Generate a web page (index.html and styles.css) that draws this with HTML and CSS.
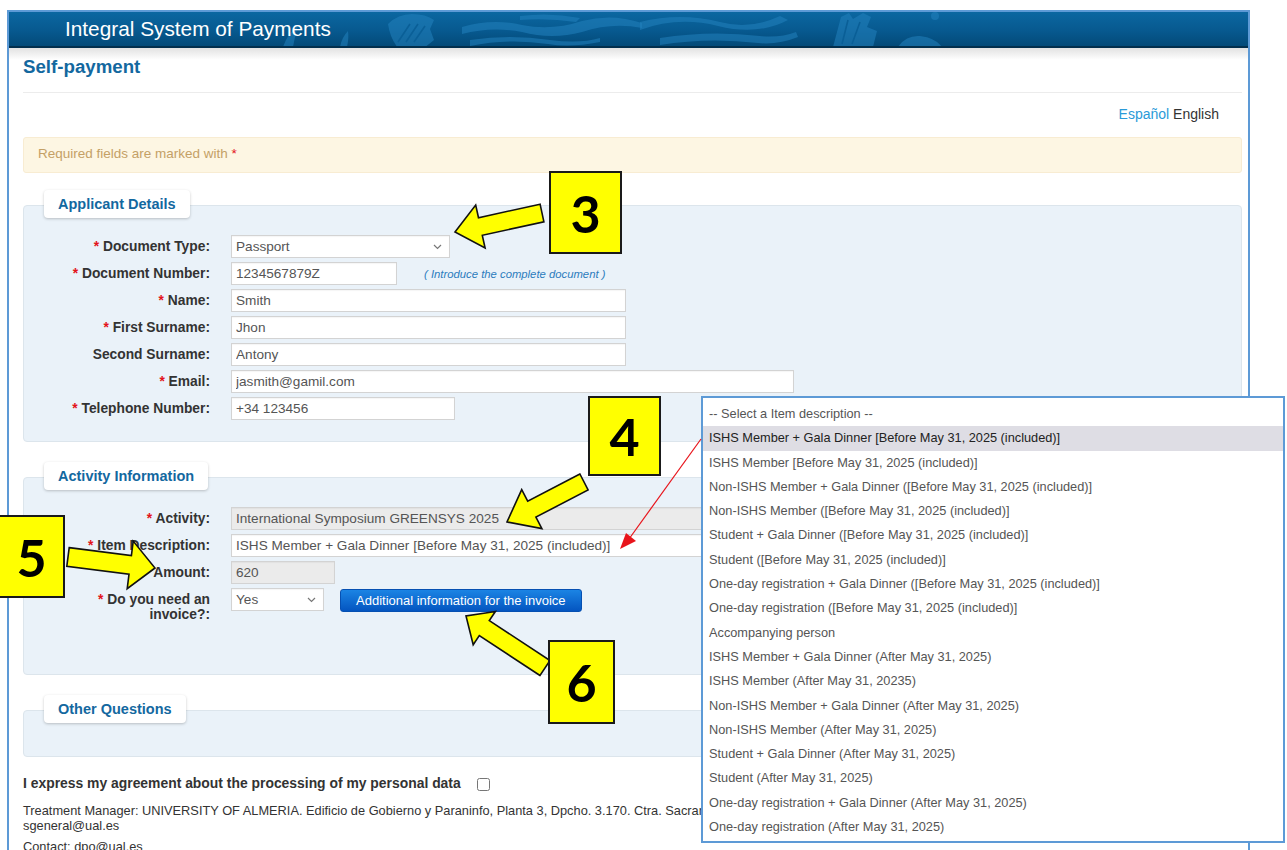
FILE: index.html
```html
<!DOCTYPE html>
<html lang="en">
<head>
<meta charset="utf-8">
<title>Integral System of Payments – Self-payment</title>
<link rel="stylesheet" href="styles.css">
</head>
<body>
<div class="frame">
  <header class="topbar">
    <svg class="topbar-art" width="1239" height="34" viewBox="9 12 1239 34" aria-hidden="true">
      <g fill="#2381bd" fill-opacity="0.55">
        <path d="M283 47 q5 -14 15 -22 q-3 11 -5 22 z"/>
        <path d="M340 47 q2 -10 8 -16 q1 8 -1 16 z"/>
        <path d="M388 24 q10 -10 24 -10 q14 0 22 6 l-4 9 l4 11 l-10 8 l-26 0 q-8 -10 -10 -24 z"/>
        <path d="M462 27 q30 -9 60 -2 q30 6 60 -4 q30 -8 60 2 l0 5 q-30 -6 -60 4 q-30 8 -60 0 q-30 -6 -60 2 z"/>
        <path d="M470 40 q40 -6 80 0 q30 4 50 -2 l0 4 q-30 6 -52 2 q-40 -6 -78 2 z"/>
        <path d="M520 16 q30 -4 60 2 l-4 4 q-28 -4 -56 -2 z"/>
        <path d="M640 22 q40 -10 80 0 q30 8 60 -6 l8 4 q-30 16 -70 6 q-40 -10 -78 4 z"/>
        <path d="M660 38 q50 -8 100 -2 q20 2 36 -4 l2 5 q-20 8 -40 6 q-50 -6 -98 2 z"/>
        <path d="M833 47 l8 -30 l8 -4 l4 6 l10 -6 l8 4 l-4 10 l10 4 l-4 16 z"/>
        <path d="M898 47 q8 -12 22 -11 q16 2 22 11 z"/>
        <circle cx="935" cy="16" r="4"/>
      </g>
      <g stroke="#0a5f97" stroke-width="1.6" fill="none">
        <path d="M398 42 l12 -18 M406 42 l12 -18 M414 42 l11 -16 M842 44 l6 -24 M852 44 l8 -22"/>
      </g>
    </svg>
    <h1 class="topbar-title">Integral System of Payments</h1>
  </header>

  <main class="content">
    <h2 class="page-title">Self-payment</h2>
    <hr class="rule">
    <div class="lang"><a href="#" class="lang-link">Español</a> <span class="lang-current">English</span></div>
    <div class="alert">Required fields are marked with <span class="req">*</span></div>

    <section class="group">
      <div class="group-tab">Applicant Details</div>
      <div class="group-body">
        <div class="form-grid">
          <label class="lbl"><span class="req">*</span> Document Type:</label>
          <div class="ctrl">
            <div class="field select w-doctype"><span>Passport</span>
              <svg class="chev" width="9" height="6" viewBox="0 0 9 6"><path d="M1 1 L4.5 4.5 L8 1"/></svg>
            </div>
          </div>

          <label class="lbl"><span class="req">*</span> Document Number:</label>
          <div class="ctrl">
            <input class="field w-docnum" type="text" value="1234567879Z">
            <span class="hint">( Introduce the complete document )</span>
          </div>

          <label class="lbl"><span class="req">*</span> Name:</label>
          <div class="ctrl"><input class="field w-name" type="text" value="Smith"></div>

          <label class="lbl"><span class="req">*</span> First Surname:</label>
          <div class="ctrl"><input class="field w-name" type="text" value="Jhon"></div>

          <label class="lbl">Second Surname:</label>
          <div class="ctrl"><input class="field w-name" type="text" value="Antony"></div>

          <label class="lbl"><span class="req">*</span> Email:</label>
          <div class="ctrl"><input class="field w-wide" type="text" value="jasmith@gamil.com"></div>

          <label class="lbl"><span class="req">*</span> Telephone Number:</label>
          <div class="ctrl"><input class="field w-phone" type="text" value="+34 123456"></div>
        </div>
      </div>
    </section>

    <section class="group">
      <div class="group-tab">Activity Information</div>
      <div class="group-body group-body-tall">
        <div class="form-grid">
          <label class="lbl"><span class="req">*</span> Activity:</label>
          <div class="ctrl"><input class="field w-wide" type="text" value="International Symposium GREENSYS 2025" disabled></div>

          <label class="lbl"><span class="req">*</span> Item Description:</label>
          <div class="ctrl">
            <div class="field select w-wide"><span>ISHS Member + Gala Dinner [Before May 31, 2025 (included)]</span>
              <svg class="chev" width="9" height="6" viewBox="0 0 9 6"><path d="M1 1 L4.5 4.5 L8 1"/></svg>
            </div>
          </div>

          <label class="lbl">Amount:</label>
          <div class="ctrl"><input class="field w-amount" type="text" value="620" disabled></div>

          <label class="lbl"><span class="req">*</span> Do you need an invoice?:</label>
          <div class="ctrl ctrl-top">
            <div class="field select w-yes"><span>Yes</span>
              <svg class="chev" width="9" height="6" viewBox="0 0 9 6"><path d="M1 1 L4.5 4.5 L8 1"/></svg>
            </div>
            <button class="btn-primary" type="button">Additional information for the invoice</button>
          </div>
        </div>
      </div>
    </section>

    <section class="group">
      <div class="group-tab">Other Questions</div>
      <div class="group-body group-body-empty"></div>
    </section>

    <div class="consent">
      <span>I express my agreement about the processing of my personal data</span>
      <input class="consent-box" type="checkbox">
    </div>
    <p class="legal">Treatment Manager: UNIVERSITY OF ALMERIA. Edificio de Gobierno y Paraninfo, Planta 3, Dpcho. 3.170. Ctra. Sacramento s/n. La Cañada de San Urbano. 04120 Almería. Telephone: 950015000. Email: sgeneral@ual.es</p>
    <p class="legal legal-next">Contact: dpo@ual.es</p>
  </main>
</div>

<ul class="listbox">
  <li>-- Select a Item description --</li>
  <li class="is-active">ISHS Member + Gala Dinner [Before May 31, 2025 (included)]</li>
  <li>ISHS Member [Before May 31, 2025 (included)]</li>
  <li>Non-ISHS Member + Gala Dinner ([Before May 31, 2025 (included)]</li>
  <li>Non-ISHS Member ([Before May 31, 2025 (included)]</li>
  <li>Student + Gala Dinner ([Before May 31, 2025 (included)]</li>
  <li>Student ([Before May 31, 2025 (included)]</li>
  <li>One-day registration + Gala Dinner ([Before May 31, 2025 (included)]</li>
  <li>One-day registration ([Before May 31, 2025 (included)]</li>
  <li>Accompanying person</li>
  <li>ISHS Member + Gala Dinner (After May 31, 2025)</li>
  <li>ISHS Member (After May 31, 20235)</li>
  <li>Non-ISHS Member + Gala Dinner (After May 31, 2025)</li>
  <li>Non-ISHS Member (After May 31, 2025)</li>
  <li>Student + Gala Dinner (After May 31, 2025)</li>
  <li>Student (After May 31, 2025)</li>
  <li>One-day registration + Gala Dinner (After May 31, 2025)</li>
  <li>One-day registration (After May 31, 2025)</li>
</ul>

<svg class="marks" width="1287" height="850" viewBox="0 0 1287 850" aria-hidden="true">
  <line x1="701" y1="439" x2="629" y2="539" stroke="#e8141b" stroke-width="1.2"/>
  <polygon points="620,549 636,541 626,533" fill="#e8141b"/>
  <g fill="#ffff00" stroke="#111" stroke-width="1.6" stroke-linejoin="miter">
    <polygon points="540.1,204.2 478.5,217.7 475.7,205.0 455,232 485.1,248.0 482.3,235.3 543.9,221.8"/>
    <polygon points="579.9,474.0 527.7,501.1 521.7,489.6 507,522 541.9,528.6 535.9,517.1 588.1,490.0"/>
    <polygon points="69.2,547.6 131.4,555.5 133.2,541.1 155,568 127.2,588.7 129.0,574.3 66.8,566.4"/>
    <polygon points="540,675.5 479.3,635.6 473.2,644.7 466,616 495.4,611.5 489.3,620.6 550,660.5"/>
  </g>
</svg>

<div class="callout callout-3">3</div>
<div class="callout callout-4">4</div>
<div class="callout callout-5">5</div>
<div class="callout callout-6">6</div>
</body>
</html>
```

FILE: styles.css
```css
* {
  box-sizing: border-box;
}

html,
body {
  margin: 0;
  padding: 0;
}

body {
  position: relative;
  width: 1287px;
  height: 850px;
  overflow: hidden;
  background: #fff;
  font-family: "Liberation Sans", Arial, sans-serif;
  font-size: 13px;
  color: #333;
}

/* Outer window frame */
.frame {
  margin: 10px 0 0 7px;
  width: 1243px;
  min-height: 840px;
  border: 2px solid #5d9ad6;
  border-bottom: 0;
}

/* Top application bar */
.topbar {
  position: relative;
  height: 36px;
  overflow: hidden;
  background: linear-gradient(#0b67a1, #07598f 55%, #034a78);
  border-bottom: 2px solid #022f4d;
}

.topbar-art {
  position: absolute;
  left: 0;
  top: 0;
}

.topbar-title {
  position: relative;
  margin: 0;
  padding-left: 56px;
  font-size: 20.8px;
  font-weight: normal;
  line-height: 33px;
  color: #fff;
}

/* Page body */
.content {
  padding: 8px 6px 0 14px;
  background: linear-gradient(#e2e2e2, #fff) no-repeat;
  background-size: 100% 12px;
}

.page-title {
  margin: 0;
  font-size: 18.7px;
  line-height: 22px;
  font-weight: bold;
  color: #13689f;
}

.rule {
  margin: 14px 0 0;
  border: 0;
  border-top: 1px solid #ececec;
}

.lang {
  margin-top: 12px;
  padding-right: 23px;
  text-align: right;
  font-size: 14px;
  line-height: 19px;
}

.lang-link {
  color: #2a9ad8;
  text-decoration: none;
}

.lang-current {
  color: #333;
}

.alert {
  margin-top: 13px;
  padding: 7px 14px 9px;
  line-height: 18px;
  background: #fdf6e3;
  border: 1px solid #f8ecd2;
  border-radius: 3px;
  font-size: 13.5px;
  color: #c4a066;
}

.req {
  color: #e3141b;
}

/* Field groups */
.group {
  margin-top: 20px;
}

.alert + .group {
  margin-top: 17px;
}

.group-tab {
  position: relative;
  z-index: 1;
  width: fit-content;
  height: 28px;
  margin: 0 0 -13px 21px;
  padding: 0 14px;
  line-height: 28px;
  background: #fff;
  border-radius: 4px;
  box-shadow: 0 1px 3px rgba(0, 0, 0, 0.22);
  font-size: 14.5px;
  font-weight: bold;
  color: #13689f;
}

.group-body {
  padding: 29px 20px 21px;
  background: #eaf2f9;
  border: 1px solid #dce5ec;
  border-radius: 4px;
}

.group-body-tall {
  padding-bottom: 52px;
}

.group-body-empty {
  height: 47px;
  padding: 0;
}

.form-grid {
  display: grid;
  grid-template-columns: 166px 1fr;
  column-gap: 21px;
  row-gap: 4px;
}

.lbl {
  padding-top: 4px;
  text-align: right;
  font-size: 13.8px;
  font-weight: bold;
  line-height: 15px;
  color: #333;
}

.ctrl {
  display: flex;
  align-items: center;
}

.ctrl-top {
  align-items: flex-start;
}

.field {
  height: 23px;
  margin: 0;
  padding: 0 4px;
  background: #fff;
  border: 1px solid #d3d3d3;
  border-radius: 0;
  box-shadow: inset 0 1px 1px rgba(0, 0, 0, 0.04);
  font-family: inherit;
  font-size: 13.6px;
  color: #555;
  outline: none;
}

.field:disabled {
  background: #ebebeb;
  color: #555;
}

.select {
  display: flex;
  align-items: center;
  justify-content: space-between;
  padding-right: 7px;
  white-space: nowrap;
}

.chev {
  flex: none;
}

.chev path {
  fill: none;
  stroke: #777;
  stroke-width: 1.2;
}

.w-doctype { width: 219px; }
.w-docnum { width: 166px; }
.w-name { width: 395px; }
.w-wide { width: 563px; }
.w-phone { width: 224px; }
.w-amount { width: 104px; }
.w-yes { width: 93px; }

.hint {
  margin-left: 27px;
  font-size: 11.3px;
  font-style: italic;
  color: #2c7cbd;
}

.btn-primary {
  height: 23px;
  margin: 1px 0 0 16px;
  padding: 0 15px;
  background: linear-gradient(#1b84e4, #0455c0);
  border: 1px solid #0650b2;
  border-radius: 3px;
  font-family: inherit;
  font-size: 13px;
  color: #fff;
}

/* Consent and legal notice */
.consent {
  display: flex;
  align-items: center;
  margin-top: 17px;
  font-size: 13.9px;
  font-weight: bold;
  line-height: 18px;
  color: #333;
}

.consent-box {
  width: 13px;
  height: 13px;
  margin: 2px 0 0 16px;
}

.legal {
  margin: 11px 0 0;
  font-size: 12.8px;
  line-height: 15px;
  color: #333;
}

.legal-next {
  margin-top: 6px;
}

/* Open item list of the description select */
.listbox {
  position: absolute;
  left: 701px;
  top: 396px;
  width: 584px;
  height: 447px;
  margin: 0;
  padding: 4px 0 0;
  list-style: none;
  background: #fff;
  border: 2px solid #5d9ad6;
  z-index: 2;
}

.listbox li {
  height: 24.3px;
  padding-left: 6px;
  line-height: 24.3px;
  font-size: 12.75px;
  white-space: nowrap;
  color: #555;
}

.listbox .is-active {
  background: #dedde4;
  color: #222;
}

/* Annotation layer */
.marks {
  position: absolute;
  left: 0;
  top: 0;
  z-index: 3;
  pointer-events: none;
}

.callout {
  position: absolute;
  z-index: 4;
  display: flex;
  align-items: center;
  justify-content: center;
  background: #ffff00;
  border: 2px solid #1a1a1a;
  font-family: Lato, "Open Sans", sans-serif;
  font-size: 52px;
  font-weight: 700;
  color: #000;
}

.callout-3 { left: 549px; top: 171px; width: 73px; height: 83px; }
.callout-4 { left: 588px; top: 396px; width: 73px; height: 80px; }
.callout-5 { left: -2px; top: 515px; width: 67px; height: 83px; }
.callout-6 { left: 548px; top: 640px; width: 67px; height: 84px; }
```
